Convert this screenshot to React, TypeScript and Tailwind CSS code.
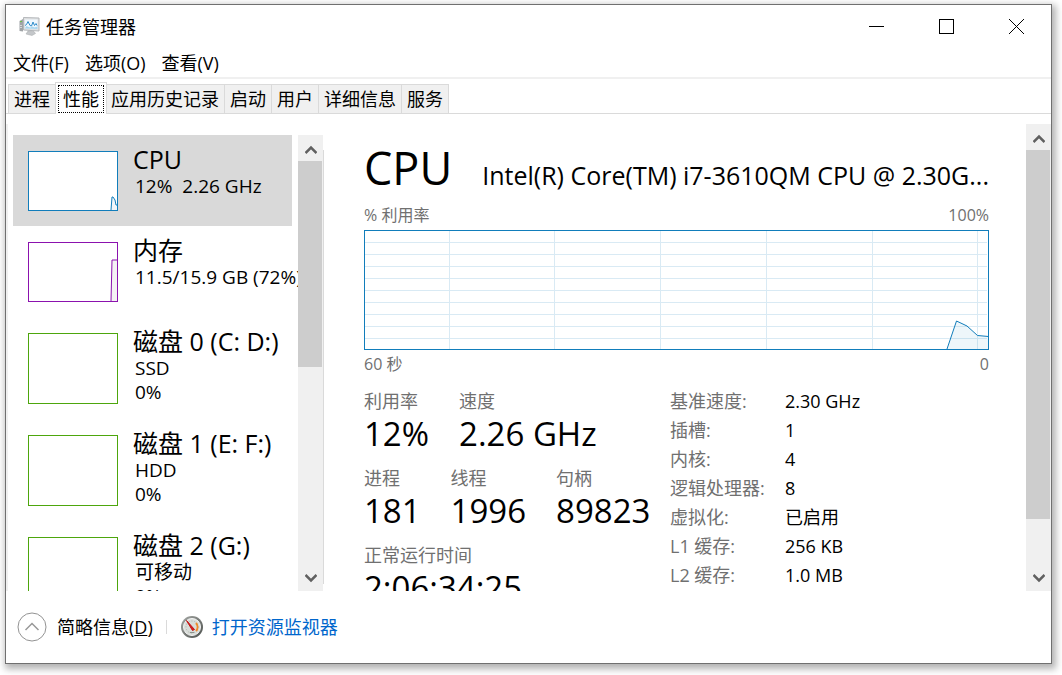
const tabs = ["进程", "性能", "应用历史记录", "启动", "用户", "详细信息", "服务"];

const menus = ["文件(F)", "选项(O)", "查看(V)"];

const resources = [
  { name: "CPU", lines: ["12%  2.26 GHz"], stroke: "#117dbb", fill: "#f1f6fa", box: "h-[60px] border-[#117dbb]", points: "82,58 83,45 84,45 86,48 87,53 88,53" },
  { name: "内存", lines: ["11.5/15.9 GB (72%)"], stroke: "#8b12ae", fill: "#f4f2f4", box: "h-[60px] border-[#8b12ae]", points: "82,58 83,17 88,17" },
  { name: "磁盘 0 (C: D:)", lines: ["SSD", "0%"], stroke: "#4da60c", fill: "none", box: "h-[71px] border-[#4da60c]", points: "" },
  { name: "磁盘 1 (E: F:)", lines: ["HDD", "0%"], stroke: "#4da60c", fill: "none", box: "h-[71px] border-[#4da60c]", points: "" },
  { name: "磁盘 2 (G:)", lines: ["可移动", "0%"], stroke: "#4da60c", fill: "none", box: "h-[71px] border-[#4da60c]", points: "" },
];

const stats = [
  [
    { label: "利用率", value: "12%" },
    { label: "速度", value: "2.26 GHz" },
  ],
  [
    { label: "进程", value: "181" },
    { label: "线程", value: "1996" },
    { label: "句柄", value: "89823" },
  ],
  [{ label: "正常运行时间", value: "2:06:34:25" }],
];

const details = [
  ["基准速度:", "2.30 GHz"],
  ["插槽:", "1"],
  ["内核:", "4"],
  ["逻辑处理器:", "8"],
  ["虚拟化:", "已启用"],
  ["L1 缓存:", "256 KB"],
  ["L2 缓存:", "1.0 MB"],
];

function TaskManagerIcon() {
  return (
    <svg width="21" height="19" viewBox="0 0 21 19" aria-hidden="true">
      <path d="M0.5 4L4 2v12.500L0.500 14z" fill="#a0a4a7" />
      <path d="M1 4.500h2" stroke="#6fc04a" />
      <path d="M1 8.500h2M1 10.500h2" stroke="#d5d7d9" />
      <path d="M4.500 0.500l15.500 0.500v13l-15.500-1z" fill="#dfe1e2" stroke="#b4b7ba" />
      <path d="M6 2.500h12.500v9.500l-12.500-0.500z" fill="#eff8fe" />
      <path d="M6 8.500l1.500-1 1.500-3 2 4 1.500 0.500 1.500-4 1.500 3.500 1.500-2 1 2" fill="none" stroke="#2f8dcb" />
      <path d="M6 11l1.500-2 2 1 2 0.500 2-1 2 1 3-1v2.500l-12.500-0.500z" fill="#a8d6ef" />
      <path d="M9 14l6 0.500 1.500 2-3.500 2-6-1.500z" fill="#c4c7ca" stroke="#a4a8ab" strokeWidth="0.500" />
    </svg>
  );
}

function GaugeIcon() {
  return (
    <svg width="24" height="24" viewBox="0 0 24 24" aria-hidden="true">
      <defs>
        <linearGradient id="rim" x1="0" y1="0" x2="1" y2="1">
          <stop offset="0" stopColor="#a5a8a5" />
          <stop offset="1" stopColor="#4c504d" />
        </linearGradient>
      </defs>
      <circle cx="12" cy="12" r="11" fill="url(#rim)" />
      <circle cx="12" cy="12" r="8.500" fill="#d9ddd9" stroke="#f5f5f5" />
      <circle cx="12" cy="12" r="6" fill="none" stroke="#a9b0a9" strokeDasharray="1 2" />
      <path d="M16 8a6 6 0 0 1 0 8" fill="none" stroke="#ef8a2b" strokeWidth="2" />
      <path d="M6.500 5.500l8 9-2 1z" fill="#d81f1f" stroke="#c41414" />
      <path d="M10 17.500h4" stroke="#8d928d" />
    </svg>
  );
}

function Scrollbar({ thumb }: { thumb: string }) {
  return (
    <div className="flex w-[25px] shrink-0 flex-col bg-[#f0f0f0]">
      <button aria-label="向上" className="flex h-[26px] shrink-0 items-center justify-center">
        <svg width="12" height="10" viewBox="0 0 12 10" className="mt-1">
          <path d="M0.500 8l5.500-5.500 5.500 5.500" fill="none" stroke="#606060" strokeWidth="2.500" />
        </svg>
      </button>
      <div className="min-h-0 flex-1 pr-px">
        <div className={`bg-[#cdcdcd] ${thumb}`} />
      </div>
      <button aria-label="向下" className="flex h-[26px] shrink-0 items-center justify-center">
        <svg width="12" height="10" viewBox="0 0 12 10">
          <path d="M0.500 2l5.500 5.500 5.500-5.500" fill="none" stroke="#606060" strokeWidth="2.500" />
        </svg>
      </button>
    </div>
  );
}

function CpuGraph() {
  return (
    <svg viewBox="0 0 625 120" preserveAspectRatio="none" className="block h-[120px] w-full">
      <g shapeRendering="crispEdges" stroke="#d9eaf4">
        {[12, 24, 36, 48, 60, 72, 84, 96, 108].map((y) => (
          <path key={y} d={`M1 ${y + 0.5}H623`} />
        ))}
        {[85, 190, 296, 402, 508, 613].map((x) => (
          <path key={x} d={`M${x + 0.5} 1V119`} />
        ))}
      </g>
      <path d="M583 119l9.500-28 10.500 5 10.500 9.500 11 1V119z" fill="#117dbb" fillOpacity="0.070" />
      <path d="M583 119l9.500-28 10.500 5 10.500 9.500 11 1" fill="none" stroke="#117dbb" />
      <rect x="0.500" y="0.500" width="624" height="119" fill="none" stroke="#117dbb" shapeRendering="crispEdges" />
    </svg>
  );
}

export default function App() {
  return (
    <div className="h-screen bg-white pt-1 pr-[10px] pb-[11px] pl-[5px] font-['Open_Sans','Noto_Sans_CJK_SC',sans-serif] text-[18px] leading-6 text-black">
      <div className="flex h-full flex-col border border-[#707070] bg-white shadow-[2px_3px_7px_2px_rgba(0,0,0,0.300)]">
        <header className="flex h-[43px] shrink-0 items-center">
          <div className="flex flex-1 items-center gap-[6px] pl-[13px]">
            <TaskManagerIcon />
            <h1>任务管理器</h1>
          </div>
          <button aria-label="最小化" className="flex h-full w-[70px] items-center justify-center">
            <svg width="15" height="15"><path d="M0 7.500h15" stroke="#000" /></svg>
          </button>
          <button aria-label="最大化" className="flex h-full w-[70px] items-center justify-center">
            <svg width="15" height="15"><rect x="0.500" y="0.500" width="14" height="14" fill="none" stroke="#000" /></svg>
          </button>
          <button aria-label="关闭" className="flex h-full w-[70px] items-center justify-center">
            <svg width="15" height="15"><path d="M0 0l15 15M15 0L0 15" stroke="#000" /></svg>
          </button>
        </header>

        <nav className="flex h-[31px] shrink-0 items-center gap-4 border-b-2 border-[#f0f0f0] pl-[7px]">
          {menus.map((menu) => (
            <button key={menu}>{menu}</button>
          ))}
        </nav>

        <div role="tablist" className="flex h-[35px] shrink-0 items-end border-b border-[#dadada] pl-[2px]">
          {tabs.map((tab) =>
            tab === "性能" ? (
              <button key={tab} role="tab" aria-selected="true" className="relative z-10 -mx-px -mb-px h-8 border border-b-0 border-[#dadada] bg-white px-[2px] pt-[2px] pb-[2px]">
                <span className="block border border-dotted border-black px-1 leading-[26px]">{tab}</span>
              </button>
            ) : (
              <button key={tab} role="tab" aria-selected="false" className="h-[29px] border-t border-r border-[#dadada] bg-[#f0f0f0] px-[5px] first:border-l">
                {tab}
              </button>
            )
          )}
        </div>

        <main className="mt-[10px] flex min-h-0 flex-1 border-l-2 border-[#f0f0f0]">
          {/* 资源列表 */}
          <aside className="flex w-[315px] shrink-0 pt-[11px] pl-[5px]">
            <ul className="min-w-0 flex-1 overflow-hidden">
              {resources.map((item) => (
                <li key={item.name} className={`mr-[6px] flex gap-[15px] pt-4 pb-[15px] pl-[15px] whitespace-pre ${item.name === "CPU" ? "bg-[#d9d9d9]" : ""}`}>
                  <div className={`w-[90px] shrink-0 border bg-white ${item.box}`}>
                    <svg width="88" height="58" className="block">
                      <polyline points={`${item.points}${item.points && " 88,58"}`} fill={item.fill} />
                      <polyline points={item.points} fill="none" stroke={item.stroke} />
                    </svg>
                  </div>
                  <div className="-mt-[7px] h-0">
                    <p className="text-[25px] leading-[30px]">{item.name}</p>
                    {item.lines.map((line) => (
                      <p key={line} className="pl-[2px] text-[19px]">{line}</p>
                    ))}
                  </div>
                </li>
              ))}
            </ul>
            <Scrollbar thumb="h-[51%]" />
          </aside>
          <div className="mt-[26px] mb-[7px] w-px bg-[#dadada]" />

          {/* CPU 详情 */}
          <section className="min-w-0 flex-1 overflow-hidden pt-[20px] pr-[37px] pl-[40px]">
            <div className="flex items-baseline justify-between whitespace-nowrap">
              <h2 className="text-[45px] leading-[48px]">CPU</h2>
              <p className="text-[25px]">Intel(R) Core(TM) i7-3610QM CPU @ 2.30G...</p>
            </div>
            <div className="mt-[11px] flex justify-between text-[16px] text-[#707070]">
              <span>% 利用率</span>
              <span>100%</span>
            </div>
            <div className="mt-[3px]">
              <CpuGraph />
            </div>
            <div className="mt-[2px] flex justify-between text-[16px] text-[#707070]">
              <span>60 秒</span>
              <span>0</span>
            </div>
            <div className="mt-[13px] flex">
              <div className="w-[306px] shrink-0">
                {stats.map((row, i) => (
                  <dl key={i} className="flex h-[77px] gap-[30px] whitespace-nowrap">
                    {row.map((stat) => (
                      <div key={stat.label}>
                        <dt className="text-[#707070]">{stat.label}</dt>
                        <dd className="text-[33px] leading-[42px]">{stat.value}</dd>
                      </div>
                    ))}
                  </dl>
                ))}
              </div>
              <dl className="whitespace-nowrap">
                {details.map(([label, value]) => (
                  <div key={label} className="flex h-[29px]">
                    <dt className="w-[115px] text-[#707070]">{label}</dt>
                    <dd>{value}</dd>
                  </div>
                ))}
              </dl>
            </div>
          </section>
          <Scrollbar thumb="h-[89%]" />
        </main>

        <footer className="flex h-[72px] shrink-0 items-center pl-[11px]">
          <button className="flex items-center gap-[10px]">
            <svg width="30" height="30" viewBox="0 0 30 30" aria-hidden="true">
              <circle cx="15" cy="15" r="14" fill="none" stroke="#939393" />
              <path d="M8.500 18l6.500-6.500 6.500 6.500" fill="none" stroke="#999" strokeWidth="1.500" />
            </svg>
            <span>简略信息(<u>D</u>)</span>
          </button>
          <div className="mx-[13px] h-[14px] w-px bg-[#dadada]" />
          <a href="#resmon" className="flex items-center gap-2 text-[#0066cc]">
            <GaugeIcon />
            打开资源监视器
          </a>
        </footer>
      </div>
    </div>
  );
}
